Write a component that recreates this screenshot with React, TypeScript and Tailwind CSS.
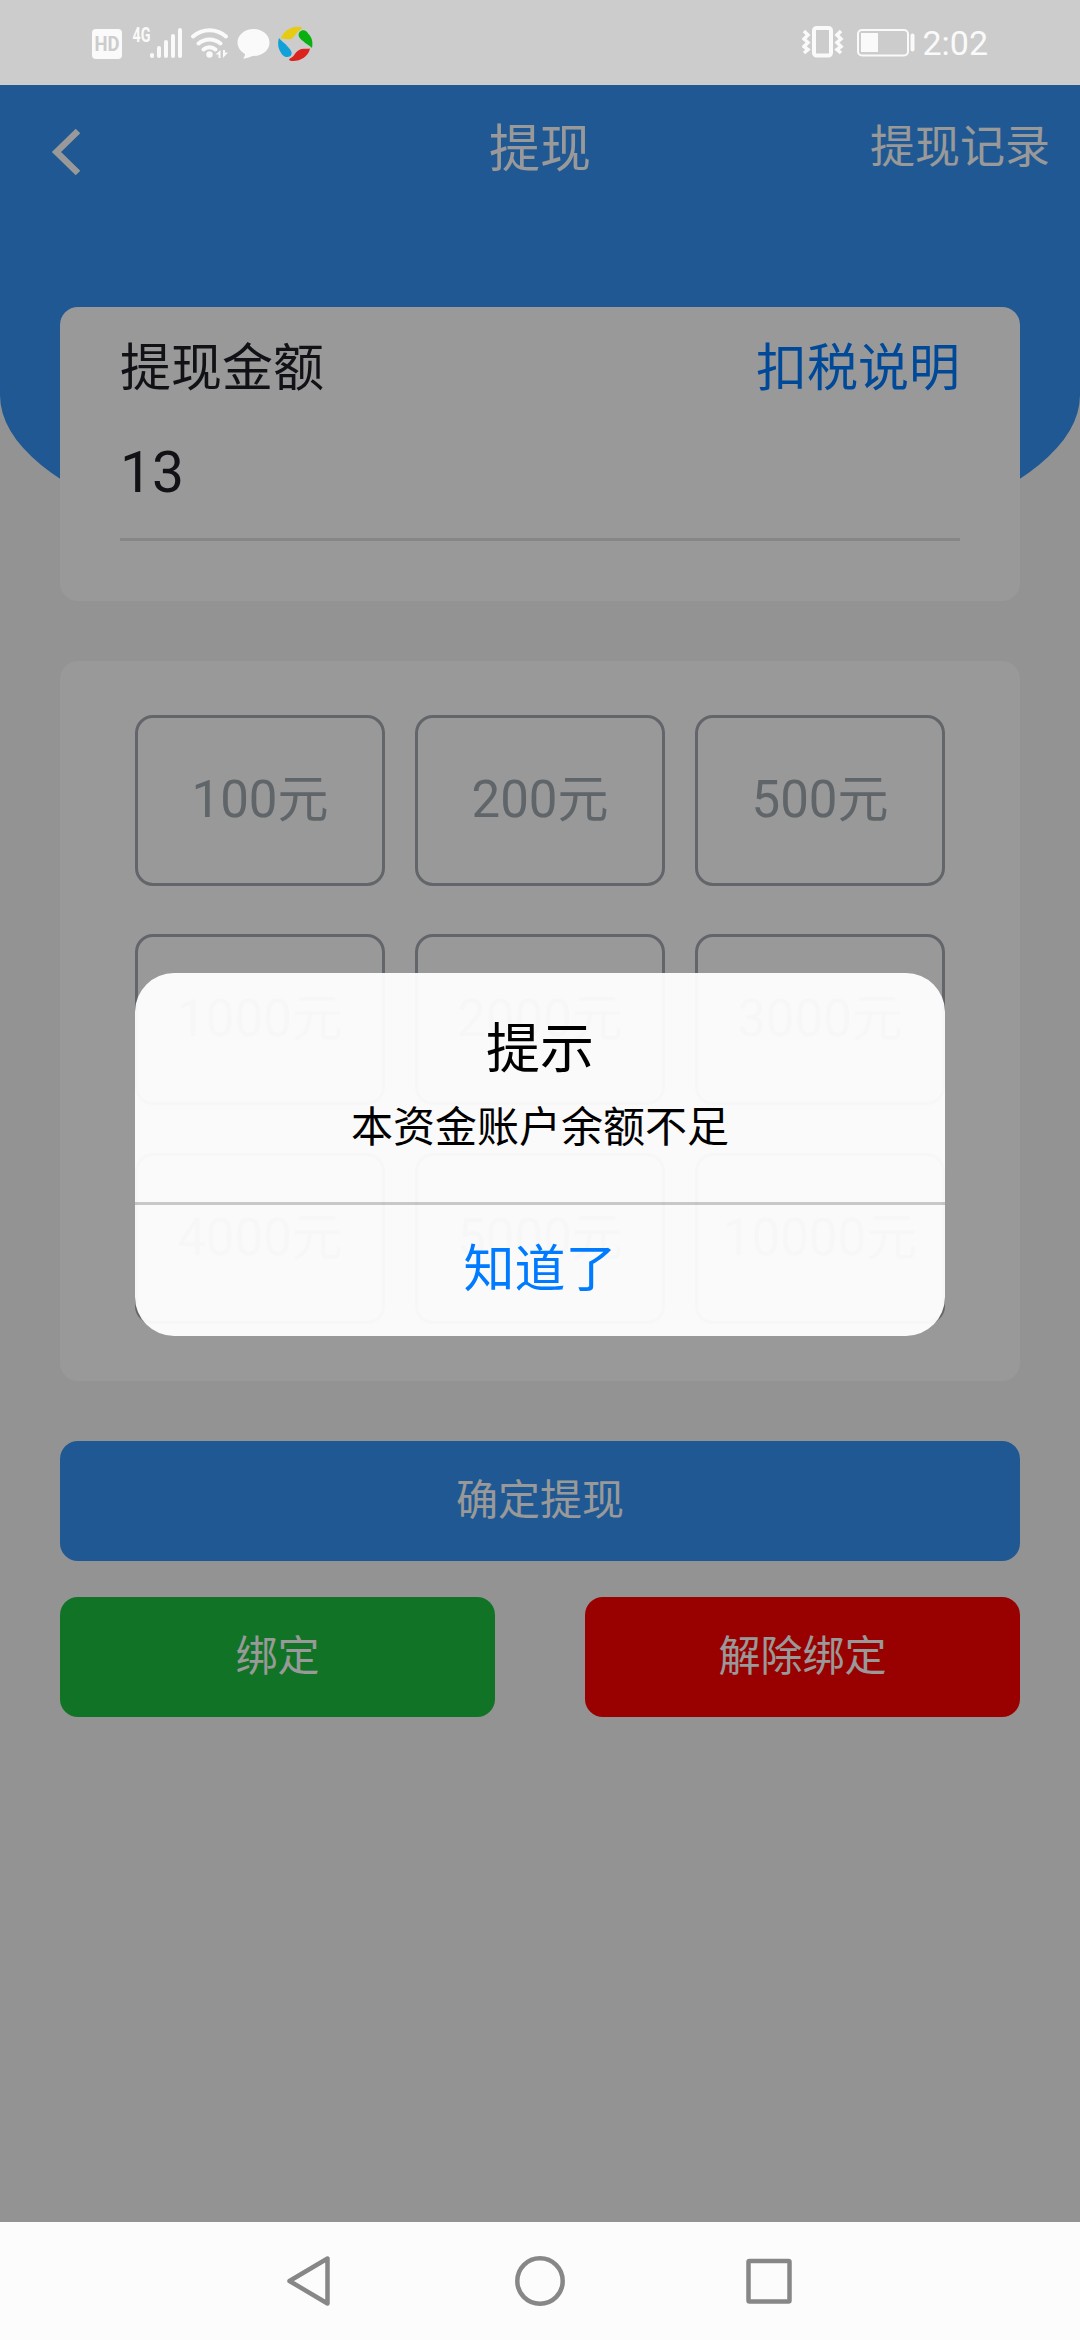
import React from 'react';

const amounts = ['100元', '200元', '500元', '1000元', '2000元', '3000元', '4000元', '5000元', '10000元'];

const StatusBar: React.FC = () => (
  <div className="flex h-[85px] shrink-0 items-center justify-between bg-[#cccccc] pl-[92px] pr-[92px]">
    <svg width="222" height="42" viewBox="92 21 222 42" fill="none">
      {/* HD badge */}
      <rect x="92" y="28" width="30" height="30" rx="4" fill="#fafafa" />
      <text x="107" y="50" textAnchor="middle" textLength="25" lengthAdjust="spacingAndGlyphs" fontSize="20" fontWeight="700" fill="#cccccc" className="font-['Roboto',sans-serif]">HD</text>
      {/* Signal */}
      <text x="132.500" y="41" textLength="18" lengthAdjust="spacingAndGlyphs" fontSize="19.500" fontWeight="700" fill="#fafafa" className="font-['Roboto',sans-serif]">4G</text>
      <g stroke="#fafafa" strokeWidth="4" strokeLinecap="round">
        <path d="M152 54v1M159 47v8M166 41v14M173 35v20M180 29v26" />
      </g>
      {/* Wifi */}
      <g stroke="#fafafa" strokeWidth="4" strokeLinecap="round">
        <path d="M193 35.500a25 25 0 0 1 33 0M198.500 42.500a17 17 0 0 1 22 0M203.500 48.500a9 9 0 0 1 12 0" />
      </g>
      <circle cx="209.500" cy="53.500" r="3.200" fill="#fafafa" />
      <path d="M220.500 49v8h-2v-3.500h-3zM223 49v8l5-5.500h-3V49z" fill="#fafafa" />
      {/* Message */}
      <path d="M253.500 28c9 0 16 6 16 13.500s-7 13.500-16 13.500c-3 0-5 2.500-10.500 2.500 1.500-1.500 2-3 2-4.500-4.500-2.500-7.500-7-7.500-11.500 0-7.500 7-13.500 16-13.500z" fill="#fafafa" />
      {/* Pinwheel */}
      <path d="M280.500 38c3-8 11-13 19.500-12 2.500 0 3 1 1 2.500-4 2-5 5-8 8-4 4-8 0-12.500 1.500z" fill="#e6cb12" />
      <path d="M299.500 31c3-3 7-2 9 2 4 4 4.500 9 3.500 14-3-3-6-4-9-7-4-3-5.500-6-3.500-9z" fill="#08b010" />
      <path d="M279 37c2 3 6 5 9 9 3 3 5 6 2.500 9-3 2-6 1-8-1-4-5-5.500-11-3.500-17z" fill="#12a0d8" />
      <path d="M310 47.500c-1.500 8-10 13-18 12.500-2 0-4-1-2-2.500 4-2 4-4 7-7 4-4 9-2 13-3z" fill="#d92420" />
    </svg>
    <div className="flex items-center">
      <svg width="114" height="36" viewBox="801 25 114 36" fill="none" stroke="#fafafa">
        <rect x="813" y="28" width="17" height="27.500" rx="2.500" strokeWidth="4" />
        <path d="M803 31l4 4-4 4 4 3.500-4 4 4 3-4 3.500M840 31l-4 4 4 4-4 3.500 4 4-4 3 4 3.500" strokeWidth="3.500" />
        <rect x="857" y="30" width="50" height="25.500" rx="4" strokeWidth="2" />
        <rect x="860" y="33" width="17" height="19" fill="#fafafa" stroke="none" />
        <path d="M911.500 35.500v14" strokeWidth="4" strokeLinecap="round" />
      </svg>
      <span className="ml-1.5 text-[34px] leading-none text-[#fafafa]">2:02</span>
    </div>
  </div>
);

const Header: React.FC = () => (
  <header className="h-[493px] bg-[#3493f3] text-white [border-radius:0_0_50%_50%/0_0_183px_183px]">
    <div className="grid h-[126px] grid-cols-3 items-center">
      <svg width="30" height="48" viewBox="0 0 30 48" fill="none" className="mt-[7px] ml-[51px]">
        <path d="M27 3L5.500 24L27 45" stroke="white" strokeWidth="6.500" />
      </svg>
      <h1 className="pt-[5px] text-center text-[51px]">提现</h1>
      <span className="pr-[30px] text-right text-[45px]">提现记录</span>
    </div>
  </header>
);

const Dialog: React.FC = () => (
  <div className="absolute top-[973px] left-[135px] flex h-[363px] w-[810px] flex-col rounded-[39px] bg-white/95 text-center text-black">
    <div className="flex h-[229px] flex-col items-center pt-[44px]">
      <h2 className="text-[54px] leading-[66px]">提示</h2>
      <p className="mt-[12px] text-[42px] leading-[66px]">本资金账户余额不足</p>
    </div>
    <div className="h-[3px] bg-black/20" />
    <button className="flex-1 pb-[3px] text-[51px] leading-none text-[#007aff]">知道了</button>
  </div>
);

const NavBar: React.FC = () => (
  <nav className="flex h-[118px] shrink-0 items-center justify-center bg-[#fcfcfc]">
    <svg width="506" height="52" viewBox="287 2255 506 52" fill="none" stroke="#878787" strokeWidth="4.500" strokeLinejoin="round">
      <path d="M327.500 2258.500v45L289.500 2281z" />
      <circle cx="540" cy="2281" r="22.700" />
      <rect x="748.500" y="2261" width="41" height="40.500" rx="1" />
    </svg>
  </nav>
);

const App: React.FC = () => {
  return (
    <div className="relative flex h-[2340px] w-[1080px] flex-col overflow-hidden bg-[#f5f5f5] font-['Roboto','Noto_Sans_CJK_SC',sans-serif]">
      <StatusBar />
      <div className="relative flex-1">
        <Header />
        <main className="-mt-[271px] px-[60px]">
          <section className="h-[294px] rounded-[18px] bg-white px-[60px] pt-[27px] text-[#1c1e26]">
            <div className="flex h-[70px] items-center justify-between text-[51px]">
              <span>提现金额</span>
              <span className="text-[#007aff]">扣税说明</span>
            </div>
            <div className="flex h-[137px] items-center border-b-[3px] border-[#dfe0e4] pt-[3px] text-[57px]">13</div>
          </section>

          <section className="mt-[60px] grid h-[720px] grid-cols-3 content-start gap-x-[30px] gap-y-[48px] rounded-[18px] bg-white px-[75px] pt-[54px]">
            {amounts.map((amount) => (
              <button key={amount} className="h-[171px] rounded-[18px] border-[3px] border-[#a3a9b0] text-[51px] text-[#9fa9ae]">
                {amount}
              </button>
            ))}
          </section>

          <button className="mt-[60px] h-[120px] w-full rounded-[18px] bg-[#3493f3] pb-[2px] text-[42px] text-white">确定提现</button>
          <div className="mt-[36px] grid grid-cols-2 gap-[90px] text-[42px] text-white">
            <button className="h-[120px] rounded-[18px] bg-[#1bc03e] pb-[2px]">绑定</button>
            <button className="h-[120px] rounded-[18px] bg-[#ff0000] pb-[2px]">解除绑定</button>
          </div>
        </main>
        {/* Dim layer */}
        <div className="absolute inset-0 bg-black/40"></div>
      </div>
      <NavBar />
      <Dialog />
    </div>
  );
};

export default App;
